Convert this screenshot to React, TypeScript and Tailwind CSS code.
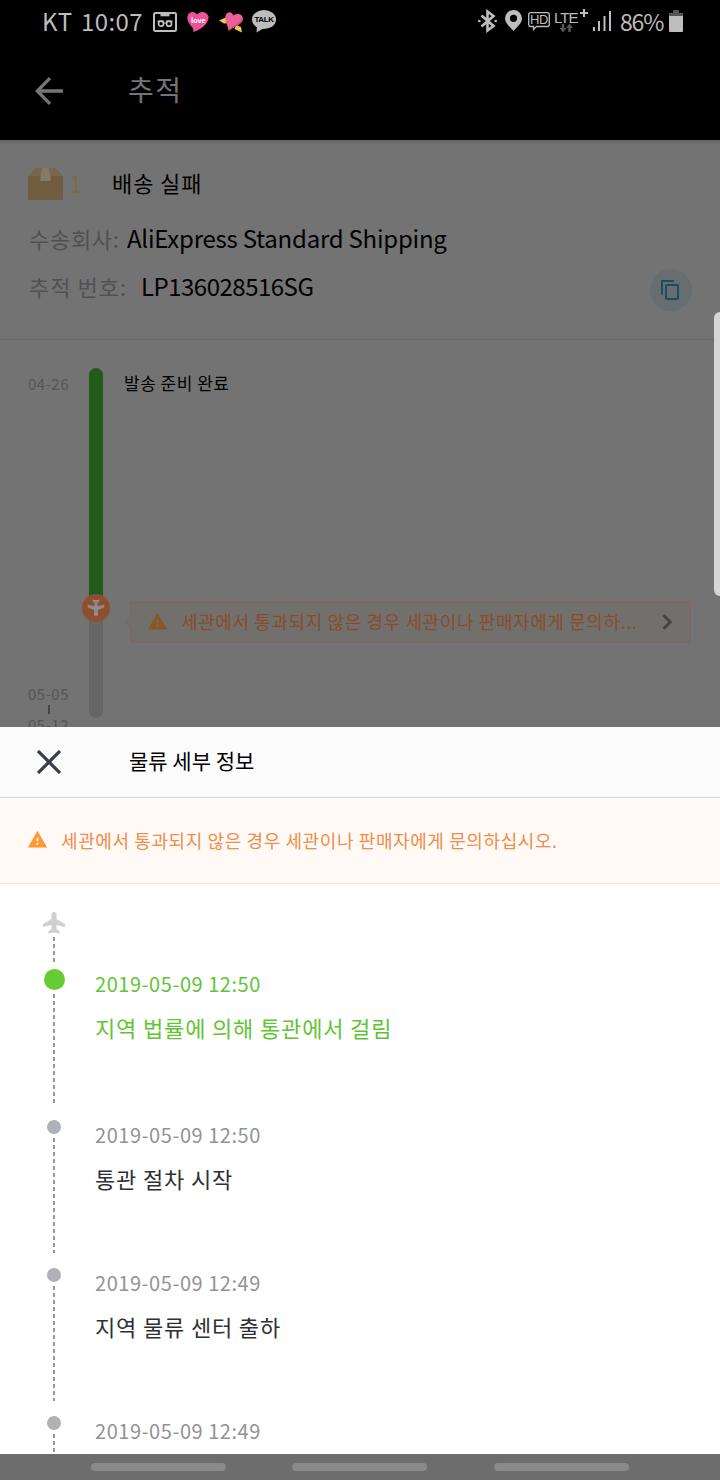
import React from 'react';
import { MdWarning } from 'react-icons/md';

interface LogEntry {
  date: string;
  title?: string;
  active?: boolean;
}

const entries: LogEntry[] = [
  { date: '2019-05-09 12:50', title: '지역 법률에 의해 통관에서 걸림', active: true },
  { date: '2019-05-09 12:50', title: '통관 절차 시작' },
  { date: '2019-05-09 12:49', title: '지역 물류 센터 출하' },
  { date: '2019-05-09 12:49' },
];

const StatusBar: React.FC = () => (
  <div className="flex h-[44px] items-center bg-black text-[#bdbdbd]">
    <div className="mb-[2px] ml-[42px] w-[39px] text-[24px] tracking-[0.8px] whitespace-nowrap">KT</div>
    <div className="mb-[2px] w-[72px] text-[24px] tracking-[0.4px] whitespace-nowrap">10:07</div>
    {/* Voicemail cassette */}
    <svg className="h-[20px] w-[24px]" viewBox="0 0 24 20" fill="none" stroke="currentColor" strokeWidth="2">
      <rect x="1" y="1" width="22" height="18" rx="1.5" />
      <path d="M7.5 3h9" strokeWidth="2.6" />
      <circle cx="8" cy="11.7" r="2.500" strokeWidth="1.7" />
      <circle cx="16" cy="11.7" r="2.500" strokeWidth="1.7" />
      <path d="M4.500 9.200H10.300L11 12M19.500 9.200H13.700L13 12" strokeWidth="1.6" />
    </svg>
    <div className="relative mb-[1px] ml-[10px] h-[22px] w-[22px]">
      <svg className="h-[22px] w-[22px]" viewBox="0 0 22 22">
        <path d="M6 21C7 18 6 17 4 15C1 11 0 9 .5 5.500C1.500 .5 7-.5 10 3.500C13-.5 20 0 21.500 5.500C22 12 15 18 6 21Z" fill="#ee529b" />
      </svg>
      <span className="absolute top-[4px] left-[4px] text-[7px] leading-[10px] font-bold text-white">love</span>
    </div>
    <svg className="ml-[10px] h-[22px] w-[24px]" viewBox="0 0 24 22">
      <path d="M0 9.500L7 6.500L9 12L5 12.500Z" fill="#f4c84d" />
      <path d="M17 14L22 16L23 21.500L15.500 18Z" fill="#f4c84d" />
      <path d="M9.500 20C9.500 15 5.500 11 6.500 5C7.500 0 12.500 0 14.500 4.500C18.500 1.500 24 3.500 24 8C23.500 14 15 15 9.500 20Z" fill="#ec5f98" />
      <path d="M23.600 6C24.500 13 15 15.500 9.500 20C13 15 21 13 23.600 6Z" fill="#c94b7c" />
    </svg>
    <div className="relative mb-[1px] ml-[9px] h-[23px] w-[24px]">
      <svg className="h-[23px] w-[24px]" viewBox="0 0 24 23" fill="currentColor">
        <ellipse cx="12" cy="9.500" rx="12" ry="9.500" />
        <path d="M5 15L4.500 22.500L12 18Z" />
      </svg>
      <span className="absolute top-[5px] left-0 w-[24px] text-center font-['Liberation_Sans'] text-[8px] leading-[10px] font-bold tracking-[-0.4px] text-black">TALK</span>
    </div>

    <svg className="mb-[3px] ml-[202px] h-[24px] w-[19px]" viewBox="0 0 19 24" fill="none" stroke="currentColor" strokeWidth="2.6">
      <path d="M3.500 6.500L15.500 17L9.500 21.500V2.500L15.500 7L3.500 17.500" />
      <circle cx="1.300" cy="12" r="1.300" fill="currentColor" stroke="none" />
      <circle cx="17.700" cy="12" r="1.300" fill="currentColor" stroke="none" />
    </svg>
    <svg className="mb-[3px] ml-[8px] h-[21px] w-[17px]" viewBox="0 0 17 21">
      <path d="M8.500 0A8.500 8.500 0 0 0 0 8.500C0 13 5 17 8.500 21C12 17 17 13 17 8.500A8.500 8.500 0 0 0 8.500 0ZM8.500 4.700A3.600 3.600 0 1 1 8.500 11.900A3.600 3.600 0 0 1 8.500 4.700Z" fill="currentColor" fillRule="evenodd" />
    </svg>
    <div className="relative mb-[2px] ml-[6px] h-[20px] w-[22px]">
      <svg className="h-[20px] w-[22px]" viewBox="0 0 22 20" fill="none" stroke="currentColor" strokeWidth="1.3">
        <path d="M2.700 1.600H19.300Q21.300 1.600 21.300 3.600V13.500Q21.300 15.500 19.300 15.500H8.500L5.500 18.500V15.500H2.700Q.7 15.500 .7 13.500V3.600Q.7 1.600 2.700 1.600Z" />
      </svg>
      <span className="absolute top-[3px] left-0 w-[22px] text-center font-['Liberation_Sans'] text-[13px] leading-[12px] tracking-[-0.5px]">HD</span>
    </div>
    <div className="relative mb-[3px] ml-[4px] h-[26px] w-[35px] font-['Liberation_Sans']">
      <span className="absolute top-[1px] left-0 text-[15px] leading-[17px] font-normal tracking-[-0.9px]">LTE</span>
      <svg className="absolute top-0 left-0 h-[26px] w-[35px]" viewBox="0 0 35 26">
        <path d="M26 5H34M30 1V9" stroke="currentColor" strokeWidth="2" />
        <path d="M9 16V21M15.500 24V19" stroke="#555555" strokeWidth="2.500" />
        <path d="M5.500 20H12.500L9 24.500ZM12 20H19L15.500 15.500Z" fill="#555555" />
      </svg>
    </div>
    <svg className="mb-[2px] ml-[4px] h-[20px] w-[18px]" viewBox="0 0 18 20" fill="currentColor">
      <path d="M0 16h2v4H0zM5 10h2v10H5zM10.500 5h2v15h-2zM16 0h2v20h-2z" />
    </svg>
    <div className="mb-[2px] ml-[9px] w-[49px] text-[23px] tracking-[-1.200px] whitespace-nowrap">86%</div>
    <svg className="mb-[3px] h-[22px] w-[14px]" viewBox="0 0 14 22">
      <path d="M0 6V3H4V0H10V3H14V6Z" fill="#555555" />
      <path d="M0 6H14V21Q14 22 13 22H1Q0 22 0 21Z" fill="currentColor" />
    </svg>
  </div>
);

const TitleBar: React.FC = () => (
  <div className="flex h-[96px] items-center bg-black pb-[3px] text-[#757575]">
    <svg className="ml-[35px] h-[28px] w-[28px]" viewBox="0 0 28 28" fill="none" stroke="currentColor" strokeWidth="3.300">
      <path d="M28 14H2.500M15 1.200L2.300 14L15 26.800" />
    </svg>
    <h1 className="mb-[3px] ml-[65px] text-[28px] tracking-[1.500px]">추적</h1>
  </div>
);

const PackageInfo: React.FC = () => (
  <div className="h-[200px] border-b border-[#686868] bg-[#737373] pt-[18px] text-black">
    <div className="flex h-[48px] items-center">
      <svg className="mt-[3px] ml-[28px] h-[32px] w-[35px]" viewBox="0 0 35 32">
        <path d="M8 0H27L35 8V31Q35 32 34 32H1Q0 32 0 31V8Z" fill="#705d40" />
        <path d="M8 0H27L35 8H0Z" fill="#77674e" />
        <path d="M14.500 0H20.500L22.500 8V13H12.500V8Z" fill="#857a67" />
      </svg>
      <div className="mt-[2px] ml-[6px] w-[43px] text-[24px] text-[#7f6a45]">1</div>
      <div className="text-[22px] tracking-[0.9px]">배송 실패</div>
    </div>
    <div className="mt-[8px] flex h-[48px] items-center whitespace-nowrap">
      <div className="ml-[29px] w-[98px] text-[22px] tracking-[0.7px] text-[#505153]">수송회사:</div>
      <div className="text-[24px] tracking-[-0.24px]">AliExpress Standard Shipping</div>
    </div>
    <div className="flex h-[48px] items-center whitespace-nowrap">
      <div className="ml-[29px] w-[112px] text-[22px] tracking-[1px] text-[#505153]">추적 번호:</div>
      <div className="text-[24px] tracking-[-0.5px]">LP136028516SG</div>
      <button type="button" className="mt-[7px] mr-[28px] ml-auto flex h-[42px] w-[42px] items-center justify-center rounded-full bg-[#676e71]">
        <svg className="mr-[2px] h-[20px] w-[18px]" viewBox="0 0 18 20" fill="none" stroke="#1d4c5c" strokeWidth="2">
          <path d="M1 14.500V1H13" />
          <rect x="5" y="5" width="12" height="14" rx=".8" />
        </svg>
      </button>
    </div>
  </div>
);

const ProgressPanel: React.FC = () => (
  <div className="flex h-[387px] overflow-hidden bg-[#737373] pt-[28px]">
    <div className="ml-[28px] w-[41px] shrink-0 text-[15px] leading-[20px] tracking-[0.5px] whitespace-nowrap text-[#555555]">
      <div className="pt-[6px]">04-26</div>
      <div className="pt-[290px]">05-05</div>
      <div className="mx-auto mt-[1px] h-[9px] w-[2px] bg-[#454545]" />
      <div className="mt-[1px]">05-12</div>
    </div>
    <div className="relative ml-[20px] h-[350px] w-[14px] shrink-0 rounded-full bg-[#666666]">
      <div className="h-[235px] rounded-t-full bg-[#245a1b]" />
      <div className="absolute top-[226px] left-[-7px] flex h-[28px] w-[28px] items-center justify-center rounded-full bg-[#8d4f2d]">
        <svg className="h-[18px] w-[18px]" viewBox="0 0 18 18" fill="#8b8b8b">
          <path d="M5.500 .5Q9 1.500 12.500 .5V2.500L10.500 3.500V7L16.500 6Q18.500 6.500 17 8.500L11 11V16Q9 18.500 7 16V11L1 8.500Q-.5 6.500 1.500 6L7.500 7V3.500L5.500 2.500Z" />
        </svg>
      </div>
    </div>
    <div className="min-w-0 flex-1 pl-[21px]">
      <div className="h-[30px] text-[17px] leading-[30px] tracking-[0.5px] text-black">발송 준비 완료</div>
      <div className="relative mt-[203px] mr-[29px] ml-[6px] flex h-[42px] items-center rounded-[3px] border-2 border-[#7c6961] bg-[#72706c]">
        <svg className="absolute top-[12px] left-[-7px] h-[14px] w-[7px]" viewBox="0 0 7 14" fill="#72706c" stroke="#7c6961" strokeWidth="1.500">
          <path d="M7 0L1 7L7 14" />
        </svg>
        <MdWarning className="mb-[2px] ml-[15px] h-[21px] w-[21px] text-[#8a5723]" />
        <div className="mb-[2px] ml-[13px] text-[18px] tracking-[0.6px] whitespace-nowrap text-[#884c2c]">
          세관에서 통과되지 않은 경우 세관이나 판매자에게 문의하...
        </div>
        <svg className="mr-[16px] ml-auto h-[16px] w-[11px] shrink-0" viewBox="0 0 11 16" fill="none" stroke="#414449" strokeWidth="3">
          <path d="M1.500 1.200L8.300 8L1.500 14.800" />
        </svg>
      </div>
    </div>
  </div>
);

const dashes =
  'w-[2px] bg-[repeating-linear-gradient(to_bottom,#969696_0px,#969696_4px,transparent_4px,transparent_7px)]';

const LogRow: React.FC<{ entry: LogEntry }> = ({ entry }) => (
  <div className={`flex shrink-0 ${entry.active ? 'h-[151px]' : 'h-[148px]'}`}>
    <div className="ml-[43px] flex w-[22px] shrink-0 flex-col items-center pt-[8px]">
      <div className={entry.active ? 'h-[21px] w-[21px] rounded-full bg-[#66cc33]' : 'h-[14px] w-[14px] rounded-full bg-[#b0b1b8]'} />
      <div className={`mt-[4px] ${dashes} ${entry.active ? 'h-[112px]' : 'h-[115px]'}`} />
    </div>
    <div className={`ml-[30px] whitespace-nowrap ${entry.active ? 'text-[#62c435]' : 'text-[#2e3036]'}`}>
      <div className={`h-[46px] text-[20px] leading-[46px] tracking-[0.55px] ${entry.active ? '' : 'text-[#919397]'}`}>{entry.date}</div>
      <div className="h-[40px] text-[22px] leading-[40px] tracking-[0.85px]">{entry.title}</div>
    </div>
  </div>
);

const DetailSheet: React.FC = () => (
  <div className="flex h-[727px] flex-col overflow-hidden bg-white">
    <div className="flex h-[71px] shrink-0 items-center border-b border-[#d4d4d4] bg-[#fbfbfb]">
      <svg className="ml-[37px] h-[24px] w-[24px]" viewBox="0 0 24 24" fill="none" stroke="#3a3e4b" strokeWidth="3.200">
        <path d="M1 1L23 23M23 1L1 23" />
      </svg>
      <h2 className="mb-[2px] ml-[68px] text-[21px] text-black">물류 세부 정보</h2>
    </div>
    <div className="flex h-[86px] shrink-0 items-center border-b border-[#e8e6e4] bg-[#fffaf5]">
      <MdWarning className="mb-[2px] ml-[27px] h-[21px] w-[21px] text-[#ff9933]" />
      <div className="mb-[1px] ml-[13px] text-[18px] tracking-[0.6px] whitespace-nowrap text-[#f08c4c]">
        세관에서 통과되지 않은 경우 세관이나 판매자에게 문의하십시오.
      </div>
    </div>
    <div className="ml-[43px] flex h-[77px] w-[22px] shrink-0 flex-col items-center pt-[28px]">
      <svg className="h-[22px] w-[22px] shrink-0" viewBox="0 0 22 22" fill="#d0d0d0">
        <path d="M8.500 2.500Q8.500 0 11 0Q13.500 0 13.500 2.500V7L22 12V15L13.500 13V17L16.500 19V21.500L11 20.500L5.500 21.500V19L8.500 17V13L0 15V12L8.500 7Z" />
      </svg>
      <div className={`mt-[3px] h-[28px] shrink-0 ${dashes}`} />
    </div>
    {entries.map((entry, i) => (
      <LogRow key={i} entry={entry} />
    ))}
  </div>
);

const NavBar: React.FC = () => (
  <div className="flex h-[26px] items-center gap-[66px] bg-[#6d6d6d] pl-[91px]">
    <div className="h-[8px] w-[135px] rounded-full bg-[#8a8a8a]" />
    <div className="h-[8px] w-[135px] rounded-full bg-[#8a8a8a]" />
    <div className="ml-[1px] h-[8px] w-[135px] rounded-full bg-[#8a8a8a]" />
  </div>
);

export default function App() {
  return (
    <div className="relative h-[1480px] w-[720px] overflow-hidden font-['Noto_Sans_CJK_KR',sans-serif] font-normal">
      <StatusBar />
      <TitleBar />
      {/* Shadow under the title bar */}
      <div className="absolute top-[140px] left-0 h-[5px] w-full bg-linear-to-b from-[#646464] to-[#737373]" />
      <PackageInfo />
      <ProgressPanel />
      <DetailSheet />
      <NavBar />
      {/* Edge panel handle */}
      <div className="absolute top-[312px] right-0 h-[284px] w-[6px] rounded-l-[6px] bg-[#d6d6d6]" />
    </div>
  );
}
